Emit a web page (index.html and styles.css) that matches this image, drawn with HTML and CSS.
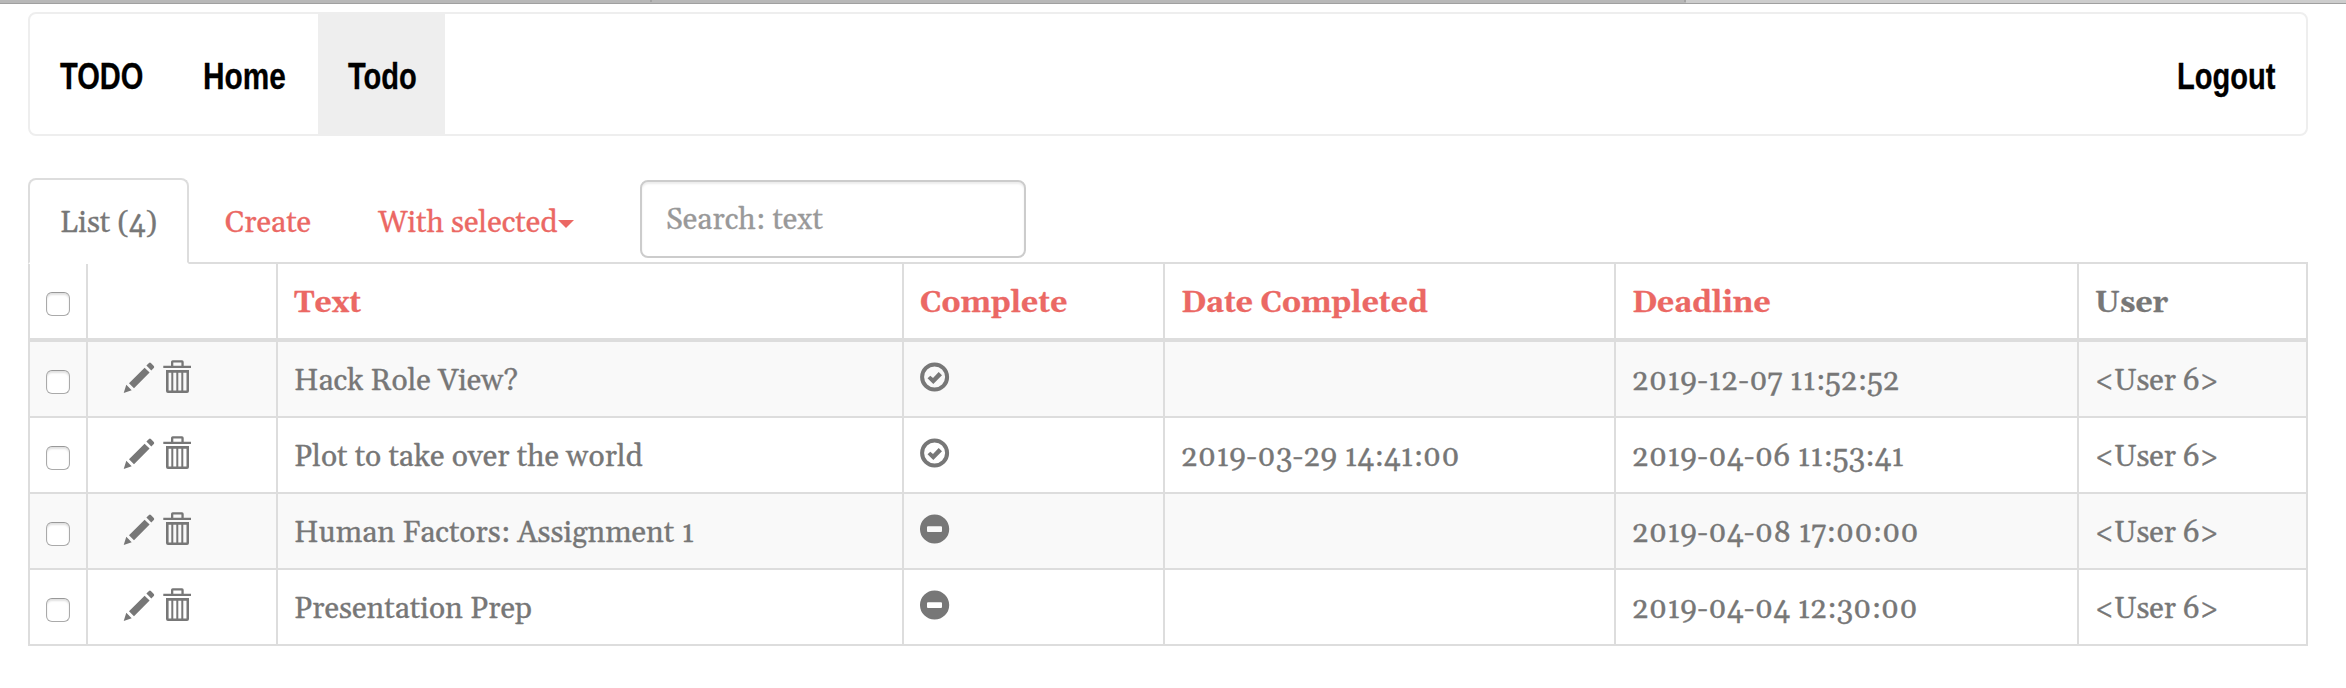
FILE: index.html
```
<!DOCTYPE html>
<html lang="en">
<head>
<meta charset="utf-8">
<title>Todo</title>
<link rel="stylesheet" href="styles.css">
</head>
<body>
<svg class="sprite" aria-hidden="true">
  <symbol id="pencil" viewBox="0 0 36 36"><path d="M3.7 33.9 6.3 25.7 11.7 31.3ZM9 24.3 24.6 8.7 29.6 13.6 14 29.2ZM26.4 6.6 29 4Q29.9 3.2 30.9 4L33.8 6.9Q34.7 8 33.8 9L31.3 11.6Z"/></symbol>
  <symbol id="trash" viewBox="0 0 32 36"><path d="M1.3 6.7H9V3Q9 1.3 10.700 1.3H20Q21.700 1.300 21.700 3V6.700H29V8.900H1.300ZM11.300 3.500V6.700H19.400V3.500Z" fill-rule="evenodd"/><path fill-rule="evenodd" d="M4 11H27V32Q27 34 25 34H6Q4 34 4 32ZM6.600 13.700V31.600H9.300V13.700ZM11.300 13.700V31.600H14.300V13.700ZM16.300 13.700V31.600H19.300V13.700ZM21.300 13.700V31.600H24.500V13.700Z"/></symbol>
  <symbol id="ok" viewBox="0 0 30 30"><circle cx="14.600" cy="15" r="12.500" fill="none" stroke="currentColor" stroke-width="4"/><path d="M7.500 16.300 10.300 13.700 13 16 18.700 10 22 13.300 13.300 22Z"/></symbol>
  <symbol id="minus" viewBox="0 0 30 30"><path fill-rule="evenodd" d="M14.600.4A14.600 14.600 0 1 1 14.600 29.600A14.600 14.600 0 1 1 14.600.4ZM8 12.300Q7 12.300 7 13.300V17Q7 18 8 18H21Q22 18 22 17V13.300Q22 12.300 21 12.300Z"/></symbol>
</svg>
<div class="chrome"><i class="chrome-tab"></i><i class="chrome-tab wide"></i><i class="chrome-active"></i></div>
<nav class="navbar">
  <a class="brand"><span>TODO</span></a>
  <a class="home"><span>Home</span></a>
  <a class="active"><span>Todo</span></a>
  <a class="logout"><span>Logout</span></a>
</nav>
<div class="tabs">
  <a class="tab current">List (4)</a>
  <a class="tab create">Create</a>
  <a class="tab selected">With selected<b class="caret"></b></a>
  <input class="search" type="text" placeholder="Search: text">
</div>
<table class="list">
  <colgroup><col class="c1"><col class="c2"><col class="c3"><col class="c4"><col class="c5"><col class="c6"><col class="c7"></colgroup>
  <thead><tr><th><input class="check" type="checkbox"></th><th></th><th><a>Text</a></th><th><a>Complete</a></th><th><a>Date Completed</a></th><th><a>Deadline</a></th><th>User</th></tr></thead>
  <tbody>
    <tr><td><input class="check" type="checkbox"></td><td><div class="actions"><svg class="pencil"><use href="#pencil"/></svg><svg class="trash"><use href="#trash"/></svg></div></td><td>Hack Role View?</td><td><svg class="state"><use href="#ok"/></svg></td><td></td><td>2019-12-07 11:52:52</td><td class="user">&lt;User 6&gt;</td></tr>
    <tr><td><input class="check" type="checkbox"></td><td><div class="actions"><svg class="pencil"><use href="#pencil"/></svg><svg class="trash"><use href="#trash"/></svg></div></td><td>Plot to take over the world</td><td><svg class="state"><use href="#ok"/></svg></td><td>2019-03-29 14:41:00</td><td>2019-04-06 11:53:41</td><td class="user">&lt;User 6&gt;</td></tr>
    <tr><td><input class="check" type="checkbox"></td><td><div class="actions"><svg class="pencil"><use href="#pencil"/></svg><svg class="trash"><use href="#trash"/></svg></div></td><td>Human Factors: Assignment 1</td><td><svg class="state"><use href="#minus"/></svg></td><td></td><td>2019-04-08 17:00:00</td><td class="user">&lt;User 6&gt;</td></tr>
    <tr><td><input class="check" type="checkbox"></td><td><div class="actions"><svg class="pencil"><use href="#pencil"/></svg><svg class="trash"><use href="#trash"/></svg></div></td><td>Presentation Prep</td><td><svg class="state"><use href="#minus"/></svg></td><td></td><td>2019-04-04 12:30:00</td><td class="user">&lt;User 6&gt;</td></tr>
  </tbody>
</table>
</body>
</html>
```
FILE: styles.css
```
* { box-sizing: border-box; }
body {
  margin: 0;
  background: #fff;
  color: #777;
  font: 30px/42px Gelasio, Georgia, "Liberation Serif", serif;
  -webkit-text-stroke: .3px;
}
.sprite { display: none; }
svg { display: block; fill: currentColor; }

.chrome {
  display: flex;
  height: 4px;
  background: #b8b8b8;
  border-bottom: 1px solid #a0a0a0;
}
.chrome-tab { width: 652px; border-right: 2px solid #a4a4a4; height: 2px; }
.chrome-tab.wide { width: 1034px; }
.chrome-active { flex: 1; background: #cdcdcd; }

.navbar {
  display: flex;
  width: 2280px;
  height: 124px;
  margin: 8px 0 0 28px;
  border: 2px solid #eee;
  border-radius: 8px;
  color: #000;
  font: bold 37.5px/120px "Liberation Sans", Arial, sans-serif;
}
.navbar a { padding-left: 30px; height: 120px; white-space: nowrap; }
.navbar span { display: inline-block; transform: scaleX(.775); transform-origin: 0 50%; padding-top: 2px; }
.brand { width: 143px; }
.home { width: 145px; }
.navbar .home span { transform: scaleX(.795); }
.navbar .active { width: 127px; background: #eee; }
.navbar .logout { margin-left: auto; width: 159px; }
.logout span { margin-left: 0; }

.tabs {
  display: flex;
  width: 2280px;
  height: 86px;
  margin: 42px 0 0 28px;
  border-bottom: 2px solid #ddd;
}
.tab { height: 86px; padding-top: 24px; color: #eb6864; white-space: nowrap; }
.tab.current {
  width: 161px;
  padding: 22px 0 0 30px;
  color: #777;
  background: #fff;
  border: 2px solid #ddd;
  border-bottom-color: #fff;
  border-radius: 8px 8px 0 0;
}
.tab.create { width: 154px; padding-left: 36px; }
.tab.selected { width: 297px; padding-left: 35px; }
.caret {
  display: inline-block;
  margin-left: 1px;
  border: 8px solid transparent;
  border-top-color: #eb6864;
  border-bottom: 0;
  vertical-align: 4px;
}
.search {
  width: 386px;
  height: 78px;
  margin-top: 2px;
  padding: 2px 24px 0;
  font: inherit;
  border: 2px solid #ccc;
  border-radius: 8px;
  background: #fff;
  box-shadow: inset 0 2px 2px rgba(0, 0, 0, .075);
}
.search::placeholder { color: #999; opacity: 1; }

.list {
  width: 2280px;
  margin-left: 28px;
  table-layout: fixed;
  border-spacing: 0;
  border-left: 2px solid #ddd;
}
.c1 { width: 58px; }
.c2 { width: 190px; }
.c3 { width: 626px; }
.c4 { width: 261px; }
.c5 { width: 451px; }
.c6 { width: 463px; }
.c7 { width: 229px; }
th, td {
  height: 76px;
  padding: 4px 0 0 16px;
  border: solid #ddd;
  border-width: 0 2px 2px 0;
  text-align: left;
  vertical-align: middle;
}
th { height: 78px; padding-top: 4px; border-bottom-width: 4px; }
th a { color: #eb6864; }
tbody tr:nth-child(odd) { background: #f9f9f9; }
td.user { letter-spacing: -.2px; }
.check {
  appearance: none;
  display: block;
  width: 24px;
  height: 24px;
  margin: 1px 0 0;
  border: 1.500px solid #aaa;
  border-top-color: #999;
  border-radius: 6px;
  background: #fff;
  box-shadow: inset 0 2px 2px rgba(0, 0, 0, .12);
}
td .check { margin-top: 2px; }
.actions { display: flex; gap: 6px; padding-left: 16px; margin-top: -9px; }
.pencil { width: 36px; height: 36px; }
.trash { width: 32px; height: 36px; }
.state { width: 30px; height: 30px; margin-top: -8px; }
```
